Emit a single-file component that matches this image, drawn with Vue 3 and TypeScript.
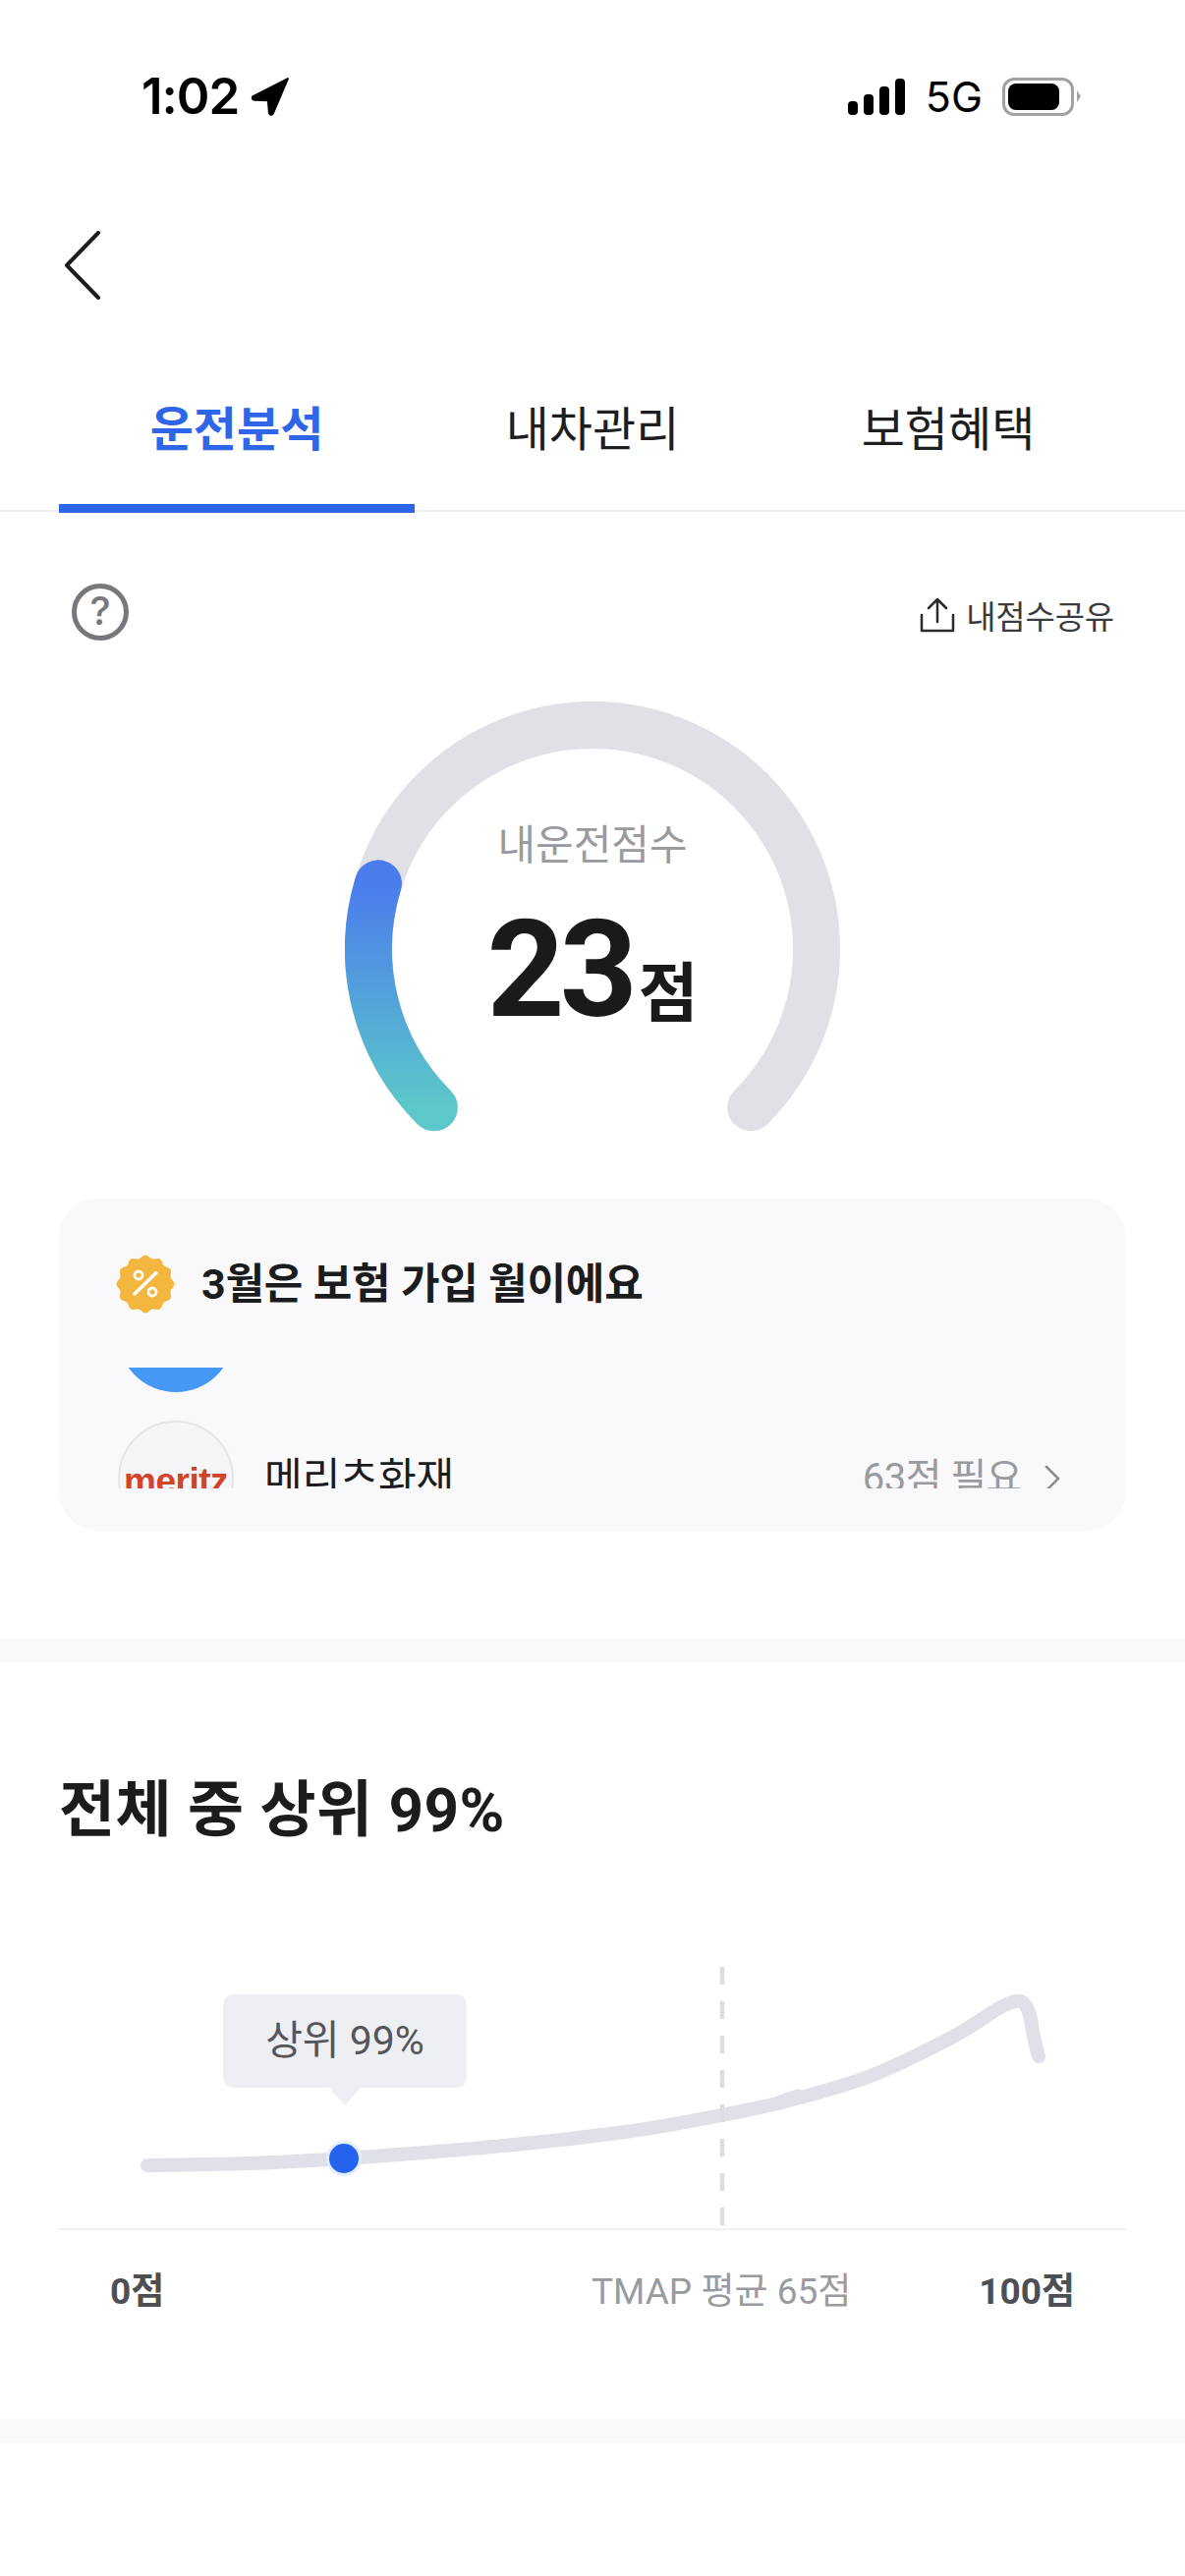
<template>
  <div class="screen">
    <div class="status">
      <div class="time">
        <span>1:02</span>
        <svg width="40" height="40" viewBox="0 0 38 38"><path d="M36 2 L2 19.500 Q1 22 4 22.500 L17 23 L18 35 Q19 38 21.500 36 Z" fill="#000" stroke="#000" stroke-width="2" stroke-linejoin="round" /></svg>
      </div>
      <div class="status-right">
        <div class="signal"><i class="s1"></i><i class="s2"></i><i class="s3"></i><i class="s4"></i></div>
        <span class="net">5G</span>
        <div class="battery"><div class="battery-fill"></div></div>
        <div class="battery-tip"></div>
      </div>
    </div>

    <div class="nav">
      <svg width="40" height="70" viewBox="0 0 40 70"><path d="M36 2 L4 35 L36 68" fill="none" stroke="#1b1c1e" stroke-width="4" stroke-linecap="round" stroke-linejoin="round" /></svg>
    </div>

    <div class="tabs">
      <div v-for="(t, i) in tabs" :key="t" class="tab" :class="{ active: i === 0 }">{{ t }}</div>
    </div>

    <section class="score">
      <div class="tools">
        <svg width="60" height="60" viewBox="0 0 60 60">
          <circle cx="30" cy="30" r="26.500" fill="none" stroke="#77787c" stroke-width="5" />
          <text x="30" y="43" text-anchor="middle" class="q">?</text>
        </svg>
        <div class="share">
          <svg width="38" height="40" viewBox="0 0 38 40"><path d="M19 27 V5 M10 13 L19 4 L28 13 M3 20 V36 H35 V20" fill="none" stroke="#2a2b2e" stroke-width="2.500" stroke-linecap="round" stroke-linejoin="round" /></svg>
          <span>내점수공유</span>
        </div>
      </div>

      <div class="gauge">
        <svg width="504" height="440" viewBox="0 0 504 440">
          <defs>
            <linearGradient id="gaugeGrad" x1="0" y1="0" x2="0" y2="1">
              <stop offset="0" stop-color="#4a7cec" />
              <stop offset="1" stop-color="#5cc8c9" />
            </linearGradient>
          </defs>
          <path :d="arcPath(225, 495)" fill="none" stroke="#e0e1e7" stroke-width="48" stroke-linecap="round" />
          <path :d="arcPath(225, 287)" fill="none" stroke="url(#gaugeGrad)" stroke-width="48" stroke-linecap="round" />
        </svg>
        <div class="gauge-label">
          <div class="gauge-title">내운전점수</div>
          <div class="gauge-value"><b>23</b><span>점</span></div>
        </div>
      </div>

      <div class="card">
        <div class="card-head">
          <svg width="60" height="60" viewBox="0 0 60 60">
            <path :d="badgePath" fill="#f3b63f" />
            <circle cx="23" cy="21" r="4" fill="none" stroke="#fff" stroke-width="2.800" />
            <circle cx="37" cy="38" r="4" fill="none" stroke="#fff" stroke-width="2.800" />
            <path d="M41 18.500 L19 40" stroke="#fff" stroke-width="3.500" stroke-linecap="round" />
          </svg>
          <span>3월은 보험 가입 월이에요</span>
        </div>
        <div class="list">
          <div class="list-inner">
            <div class="row"><div class="logo blue"></div></div>
            <div class="row">
              <div class="logo meritz">meritz</div>
              <div class="row-name">메리츠화재</div>
              <div class="row-need">63점 필요</div>
              <svg width="18" height="30" viewBox="0 0 18 30"><path d="M3 3 L15 15 L3 27" fill="none" stroke="#8b8d92" stroke-width="2.500" stroke-linecap="round" stroke-linejoin="round" /></svg>
            </div>
          </div>
        </div>
      </div>
    </section>

    <div class="divider"></div>

    <section class="rank">
      <h2>전체 중 상위 99%</h2>
      <div class="chart">
        <svg width="1086" height="267" viewBox="0 0 1086 267">
          <path :d="curvePath" fill="none" stroke="#e0e1e8" stroke-width="14" stroke-linecap="round" stroke-linejoin="round" />
          <path d="M734 138 L752 132" fill="none" stroke="#e0e1e8" stroke-width="13" stroke-linecap="round" />
          <path d="M675 1 V266" stroke="#dcdde1" stroke-width="4.500" stroke-dasharray="18 17" />
          <circle cx="290" cy="196" r="18" fill="#e2edfd" />
          <circle cx="290" cy="196" r="15" fill="#2563ee" />
        </svg>
        <div class="tooltip">상위 99%</div>
      </div>
      <div class="axis">
        <span class="axis-end">0점</span>
        <span class="axis-mid">TMAP 평균 65점</span>
        <span class="axis-end">100점</span>
      </div>
    </section>

    <div class="divider second"></div>
  </div>
</template>

<script setup lang="ts">
import { computed } from "vue";

const tabs = ["운전분석", "내차관리", "보험혜택"];

// gauge centre and radius, angles clockwise from 12 o'clock
const cx = 252;
const cy = 252;
const r = 228;

const arcPath = (from: number, to: number) => {
  const pt = (a: number) => {
    const rad = (a * Math.PI) / 180;
    return `${cx + r * Math.sin(rad)} ${cy - r * Math.cos(rad)}`;
  };
  const large = to - from > 180 ? 1 : 0;
  return `M${pt(from)} A${r} ${r} 0 ${large} 1 ${pt(to)}`;
};

const badgePath = computed(() => {
  const pts: string[] = [];
  for (let i = 0; i <= 180; i++) {
    const a = (i / 180) * Math.PI * 2;
    const rr = 28 + 1.5 * Math.cos(a * 12);
    const x = 30 + rr * Math.sin(a);
    const y = 30 - rr * Math.cos(a);
    pts.push(`${i === 0 ? "M" : "L"}${x.toFixed(2)} ${y.toFixed(2)}`);
  }
  return pts.join(" ") + " Z";
});

// points read off the reference, relative to the chart box
const curve: [number, number][] = [
  [90, 203], [191, 201], [290, 196], [442, 184], [576, 169], [674, 152],
  [743, 137], [826, 112], [910, 72], [955, 44], [973, 36], [982, 38],
  [988, 50], [992, 72], [997, 92],
];

const curvePath = computed(() => {
  let d = `M${curve[0][0]} ${curve[0][1]}`;
  for (let i = 1; i < curve.length; i++) {
    const p0 = curve[Math.max(i - 2, 0)];
    const p1 = curve[i - 1];
    const p2 = curve[i];
    const p3 = curve[Math.min(i + 1, curve.length - 1)];
    const c1x = p1[0] + (p2[0] - p0[0]) / 6;
    const c1y = p1[1] + (p2[1] - p0[1]) / 6;
    const c2x = p2[0] - (p3[0] - p1[0]) / 6;
    const c2y = p2[1] - (p3[1] - p1[1]) / 6;
    d += ` C${c1x} ${c1y} ${c2x} ${c2y} ${p2[0]} ${p2[1]}`;
  }
  return d;
});
</script>

<style>
html,
body {
  margin: 0;
  background: #fff;
}
</style>

<style scoped>
.screen {
  width: 1206px;
  height: 2622px;
  overflow: hidden;
  background: #fff;
  font-family: Roboto, "Noto Sans CJK KR", sans-serif;
  color: #1b1c1e;
}

.status {
  height: 150px;
  box-sizing: border-box;
  padding: 70px 106px 0 144px;
  display: flex;
  justify-content: space-between;
  align-items: flex-start;
}

.time {
  display: flex;
  align-items: center;
  gap: 12px;
  height: 56px;
  font: 600 51px/56px Inter, "Liberation Sans", sans-serif;
  color: #000;
  letter-spacing: -1px;
}

.status-right {
  display: flex;
  align-items: center;
  height: 56px;
}

.signal {
  display: flex;
  align-items: flex-end;
  gap: 6px;
  margin-right: 21px;
}

.signal i {
  display: block;
  width: 10px;
  border-radius: 4px;
  background: #000;
}

.s1 { height: 14px; }
.s2 { height: 21px; }
.s3 { height: 29px; }
.s4 { height: 37px; }

.net {
  font: 400 43px/56px Inter, "Liberation Sans", sans-serif;
  color: #000;
  margin-right: 20px;
}

.battery {
  width: 73px;
  height: 39px;
  box-sizing: border-box;
  border: 3px solid #a2a2a2;
  border-radius: 12px;
  padding: 3px;
}

.battery-fill {
  width: 52px;
  height: 27px;
  background: #000;
  border-radius: 8px;
}

.battery-tip {
  width: 0;
  height: 0;
  margin-left: 3px;
  border-left: 4px solid #a2a2a2;
  border-top: 6px solid transparent;
  border-bottom: 6px solid transparent;
}

.nav {
  height: 240px;
  box-sizing: border-box;
  padding: 85px 0 0 64px;
}

.nav svg {
  display: block;
}

.tabs {
  height: 131px;
  box-sizing: border-box;
  padding: 0 60px;
  display: flex;
  border-bottom: 2px solid #eeeff1;
}

.tab {
  flex: 1;
  height: 132px;
  box-sizing: border-box;
  padding-top: 18px;
  text-align: center;
  font-size: 48px;
  line-height: 60px;
  color: #1d1e20;
}

.tab.active {
  color: #2f66e8;
  font-weight: 700;
  border-bottom: 9px solid #2f66e8;
}

.score {
  padding: 0 60px;
}

.tools {
  display: flex;
  justify-content: space-between;
  align-items: center;
  padding: 72px 12px 0 12px;
  height: 60px;
}

.tools > svg {
  display: block;
}

.q {
  font: 500 40px Inter, sans-serif;
  fill: #77787c;
}

.share {
  display: flex;
  align-items: center;
  gap: 8px;
  padding-top: 5px;
  font-size: 33px;
  letter-spacing: -0.2px;
  color: #3a3b3e;
}

.share svg {
  margin-right: 2px;
}

.gauge {
  position: relative;
  width: 504px;
  height: 440px;
  margin: 61px auto 0;
}

.gauge svg {
  display: block;
}

.gauge-label {
  position: absolute;
  top: 112px;
  left: 0;
  right: 0;
  text-align: center;
}

.gauge-title {
  font-size: 42px;
  line-height: 70px;
  color: #9a9ba0;
}

.gauge-value {
  display: flex;
  justify-content: center;
  align-items: baseline;
  margin-top: 6px;
  line-height: 170px;
}

.gauge-value b {
  font: 700 138px/170px Roboto, sans-serif;
  letter-spacing: -5px;
  color: #1a1a1c;
}

.gauge-value span {
  margin-left: 6px;
  font-size: 66px;
  font-weight: 700;
  color: #1a1a1c;
}

.card {
  margin-top: 66px;
  height: 338px;
  box-sizing: border-box;
  background: #f9f9fb;
  border-radius: 40px;
  padding: 57px 60px 0;
}

.card-head {
  display: flex;
  align-items: center;
  gap: 27px;
  height: 60px;
  font-size: 43px;
  font-weight: 700;
  letter-spacing: -0.2px;
}

.card-head svg {
  flex: none;
  margin-left: -2px;
}

.card-head span {
  padding-bottom: 9px;
}

.list {
  margin-top: 55px;
  height: 123px;
  overflow: hidden;
}

.list-inner {
  margin-top: -93px;
}

.row {
  display: flex;
  align-items: center;
  height: 118px;
  margin-bottom: 29px;
  padding-right: 6px;
}

.logo {
  flex: none;
  width: 118px;
  height: 118px;
  box-sizing: border-box;
  border-radius: 50%;
}

.logo.blue {
  background: #4698f5;
}

.logo.meritz {
  background: #f6f6f8;
  border: 2px solid #e6e6e8;
  color: #d2432a;
  font: 700 37px/119px "Liberation Sans", sans-serif;
  text-align: center;
  letter-spacing: -0.5px;
}

.row-name {
  margin-left: 31px;
  font-size: 42px;
  line-height: 60px;
}

.row-need {
  margin: 0 22px 0 auto;
  font-size: 40px;
  line-height: 60px;
  letter-spacing: -0.5px;
  color: #9a9ba0;
}

.divider {
  height: 24px;
  margin-top: 110px;
  background: #f9f9fb;
}

.divider.second {
  margin-top: 0;
}

.rank {
  height: 770px;
  box-sizing: border-box;
  padding: 111px 60px 0;
}

h2 {
  margin: 0;
  height: 80px;
  font-size: 62px;
  font-weight: 700;
  line-height: 80px;
  letter-spacing: 0.5px;
}

.chart {
  position: relative;
  margin-top: 118px;
  height: 267px;
  border-bottom: 2px solid #eeeff1;
}

.chart svg {
  display: block;
}

.tooltip {
  position: absolute;
  left: 167px;
  top: 29px;
  width: 248px;
  height: 95px;
  border-radius: 10px;
  background: #eeeff2;
  text-align: center;
  font-size: 41px;
  line-height: 95px;
  color: #55565a;
}

.tooltip::after {
  content: "";
  position: absolute;
  left: 108px;
  top: 95px;
  border-left: 16px solid transparent;
  border-right: 16px solid transparent;
  border-top: 18px solid #eeeff2;
}

.axis {
  display: flex;
  align-items: center;
  margin-top: 33px;
  padding: 0 52px;
}

.axis span {
  font-size: 37px;
  line-height: 60px;
}

.axis-end {
  font-weight: 700;
  color: #4e4f53;
}

.axis-mid {
  color: #9a9ba0;
  margin-left: auto;
  margin-right: 130px;
  font-weight: 400;
}
</style>
